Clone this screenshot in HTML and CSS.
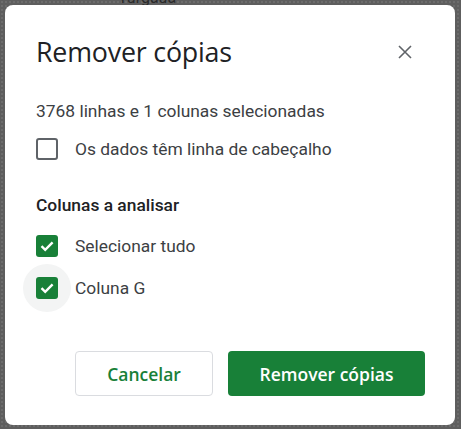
FILE: index.html
```html
<!DOCTYPE html>
<html lang="pt">
<head>
<meta charset="utf-8">
<title>Remover cópias</title>
<link rel="stylesheet" href="styles.css">
</head>
<body>
<div class="backdrop-text">Turgaua</div>
<div class="dialog">
  <div class="header">
    <h1 class="title">Remover cópias</h1>
    <button class="close" aria-label="Fechar">
      <svg width="14" height="14" viewBox="0 0 14 14"><path d="M1 1L13 13M13 1L1 13" stroke="#5f6368" stroke-width="1.6" fill="none"/></svg>
    </button>
  </div>
  <p class="info">3768 linhas e 1 colunas selecionadas</p>
  <label class="row">
    <span class="box empty"></span>
    <span class="label">Os dados têm linha de cabeçalho</span>
  </label>
  <h2 class="section">Colunas a analisar</h2>
  <label class="row">
    <span class="box checked"><svg width="22" height="22" viewBox="0 0 22 22"><path d="M5.5 11.2L9.2 14.8L16.6 7.4" stroke="#fff" stroke-width="2.4" fill="none"/></svg></span>
    <span class="label">Selecionar tudo</span>
  </label>
  <label class="row hover">
    <span class="box checked"><svg width="22" height="22" viewBox="0 0 22 22"><path d="M5.5 11.2L9.2 14.8L16.6 7.4" stroke="#fff" stroke-width="2.4" fill="none"/></svg></span>
    <span class="label">Coluna G</span>
  </label>
  <div class="actions">
    <button class="btn secondary">Cancelar</button>
    <button class="btn primary">Remover cópias</button>
  </div>
</div>
</body>
</html>
```

FILE: styles.css
```css
html, body {
  margin: 0;
  padding: 0;
}
body {
  width: 461px;
  height: 429px;
  background-color: #5e5e5e;
  background-image: radial-gradient(#6c6c6c 0.8px, transparent 1px);
  background-size: 4px 4px;
  position: relative;
  overflow: hidden;
  font-family: Roboto, "Liberation Sans", sans-serif;
}
.backdrop-text {
  position: absolute;
  left: 118px;
  top: -12px;
  font-size: 16px;
  color: #2a2a2a;
}
.dialog {
  position: absolute;
  left: 5px;
  top: 5px;
  width: 450px;
  height: 420px;
  box-sizing: border-box;
  background: #fff;
  border-radius: 8px;
  padding: 0 30px 29px 31px;
  display: flex;
  flex-direction: column;
}
.header {
  display: flex;
  align-items: center;
  justify-content: space-between;
  height: 93px;
}
.title {
  margin: 0;
  font-family: "Open Sans", Roboto, sans-serif;
  font-weight: 400;
  font-size: 26.8px;
  color: #202124;
  letter-spacing: -0.2px;
}
.close {
  border: 0;
  background: none;
  padding: 0;
  width: 14px;
  height: 14px;
  margin-right: 13px;
  display: flex;
}
.info {
  margin: 0;
  font-size: 17.4px;
  line-height: 20px;
  color: #3c4043;
  position: relative;
  top: 3px;
}
.row {
  display: flex;
  align-items: center;
  gap: 17px;
  height: 22px;
  margin-top: 20px;
  position: relative;
}
.box {
  width: 22px;
  height: 22px;
  box-sizing: border-box;
  border-radius: 3px;
  flex: none;
  display: flex;
  position: relative;
  z-index: 1;
}
.box.empty {
  border: 2.5px solid #5f6368;
}
.box.checked {
  background: #188038;
}
.hover::before {
  content: "";
  position: absolute;
  left: -13px;
  top: -13px;
  width: 48px;
  height: 48px;
  border-radius: 50%;
  background: #f3f4f4;
}
.label {
  font-size: 17.4px;
  color: #3c4043;
  position: relative;
}
.section {
  margin: 35px 0 0;
  font-size: 17.4px;
  font-weight: 500;
  line-height: 20px;
  color: #202124;
}
.actions {
  margin-top: auto;
  display: flex;
  justify-content: flex-end;
  gap: 15px;
}
.btn {
  height: 45px;
  border-radius: 4px;
  font-family: "Open Sans", Roboto, sans-serif;
  font-size: 17.5px;
  font-weight: 600;
  cursor: pointer;
}
.secondary {
  width: 138px;
  background: #fff;
  border: 1px solid #dadce0;
  color: #188038;
}
.primary {
  width: 197px;
  background: #188038;
  border: 0;
  color: #fff;
}
```
